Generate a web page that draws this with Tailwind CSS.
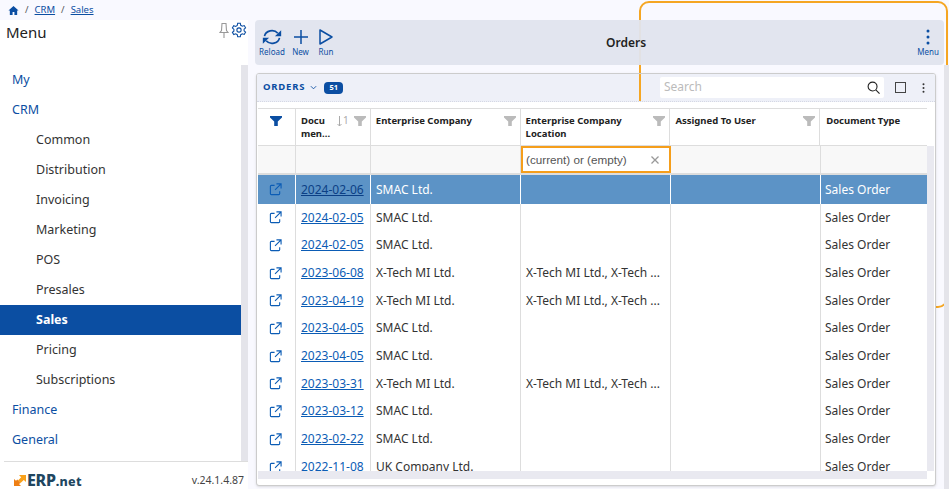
<!DOCTYPE html>
<html lang="en">
  <head>
    <meta charset="UTF-8" />
    <title>Orders</title>
    <script src="https://cdn.jsdelivr.net/npm/@tailwindcss/browser@4"></script>
  </head>
  <body class="bg-[#f9f9ff] text-[#333] font-['Noto_Sans',sans-serif] overflow-hidden">
    <div class="relative w-[949px] h-[489px] overflow-hidden">
      <!-- Orange highlight outline -->
      <div class="absolute left-[639px] top-[1px] w-[309px] h-[307px] border-2 border-[#f5a623] rounded-[10px]"></div>

      <!-- Breadcrumb -->
      <div class="relative h-5 flex items-center pl-[8px] text-[9.500px] text-[#555] gap-[6px]">
        <svg class="w-[11px] h-[11px] text-[#0b4ea2]" viewBox="0 0 24 24" fill="currentColor"><path d="M12 2 1 12h3v10h6v-7h4v7h6V12h3z" /></svg>
        <span>/</span>
        <a class="text-[#0b4ea2] underline">CRM</a>
        <span>/</span>
        <a class="text-[#0b4ea2] underline">Sales</a>
      </div>

      <div class="relative flex h-[469px]">
        <!-- Sidebar -->
        <aside class="w-[248px] bg-white flex flex-col shrink-0">
          <div class="h-[45px] flex justify-between pl-[6px] pr-[1px]">
            <span class="text-[15px] leading-[24px] text-[#222]">Menu</span>
            <div class="flex gap-[1px] pt-[2px]">
              <svg class="w-[12px] h-[17px] text-[#999]" viewBox="0 0 12 17" fill="none" stroke="currentColor" stroke-width="1.100"><path d="M4 1.500h4l.5 7 1.500 2H2l1.500-2zM6 10.500v5.500" /></svg>
              <svg class="w-[16px] h-[16px] text-[#0b4ea2]" viewBox="0 0 24 24" fill="none" stroke="currentColor" stroke-width="1.600"><circle cx="12" cy="12" r="3.200" /><path d="M10 2h4l.6 3 2.400 1.400 2.900-1 2 3.400-2.300 2a7 7 0 0 1 0 2.400l2.300 2-2 3.400-2.900-1-2.400 1.400-.6 3h-4l-.6-3L7 17.800l-2.900 1-2-3.400 2.300-2a7 7 0 0 1 0-2.400l-2.300-2 2-3.400 2.900 1L9.400 5z" /></svg>
            </div>
          </div>
          <div class="flex flex-1 min-h-0">
            <nav id="menu" class="w-[241px] text-[12.500px] text-[#0b4ea2]"></nav>
            <div class="w-[7px] bg-[#e4e4ea]"></div>
          </div>
          <div class="h-[28px] ml-[4px] border-t border-[#ddd] flex items-center justify-between pr-[4px] pt-[10px]">
            <div class="flex items-center pl-[10px] gap-[1px]">
              <svg class="w-[12px] h-[11px]" viewBox="0 0 12 11">
                <path d="M5 0h7v7L9.800 5 6.500 8 4 5.500 7.200 2.300z" fill="#f9a11b" />
                <path d="M0 4l2 1.700L3.300 4.500 6.500 8 5 9l2 2H0z" fill="#ee7f14" />
              </svg>
              <span class="text-[16px] leading-none font-extrabold text-[#20465f] tracking-[-0.3px]">ERP<span class="text-[12.500px] tracking-[0.3px]">.net</span></span>
            </div>
            <span class="text-[10.500px] text-[#444]">v.24.1.4.87</span>
          </div>
        </aside>

        <!-- Main -->
        <main class="relative flex-1 pl-[7px] pr-[5px]">
          <div class="relative h-[45px] bg-[#e0e4ee]/95 rounded-[4px] flex items-center text-[#0b4ea2] text-[8px]">
            <div class="flex items-start gap-[7px] pl-[5px]">
              <button class="flex flex-col items-center w-[24px]">
                <svg class="w-[20px] h-[18px]" viewBox="0 0 24 20" fill="none" stroke="currentColor" stroke-width="2">
                  <path d="M3 9A9 8 0 0 1 19 5.500M21 11A9 8 0 0 1 5 14.500" />
                  <path d="M15.500 9H23V2zM8.500 11H1v7z" fill="currentColor" stroke="none" />
                </svg>
                <span>Reload</span>
              </button>
              <button class="flex flex-col items-center w-[19px]">
                <svg class="w-[18px] h-[18px]" viewBox="0 0 18 18" stroke="currentColor" stroke-width="1.500"><path d="M9 2v14M2 9h14" /></svg>
                <span>New</span>
              </button>
              <button class="flex flex-col items-center w-[16px] ml-[1px]">
                <svg class="w-[16px] h-[18px]" viewBox="0 0 16 18" fill="none" stroke="currentColor" stroke-width="1.500"><path d="M2 2v14l12-7z" stroke-linejoin="round" /></svg>
                <span>Run</span>
              </button>
            </div>
            <h1 class="absolute left-[351px] text-[12px] font-semibold text-[#222]">Orders</h1>
            <button class="absolute right-[5px] flex flex-col items-center">
              <svg class="w-[6px] h-[18px]" viewBox="0 0 6 18" fill="currentColor"><circle cx="3" cy="3" r="1.500" /><circle cx="3" cy="9" r="1.500" /><circle cx="3" cy="15" r="1.500" /></svg>
              <span>Menu</span>
            </button>
          </div>

          <!-- Orders panel -->
          <section class="relative ml-[1px] mt-[8px] w-[680px] h-[413px] bg-white border border-[#ccc] rounded-[3px] shadow-sm flex flex-col overflow-hidden">
            <div class="relative h-[28px] shrink-0 bg-[#eef0f8] border-b border-dotted border-[#d5d8e4] flex items-center pl-[6px] pr-[10px]">
              <span class="absolute left-[382px] top-0 bottom-0 w-[2px] bg-[#f5a623]"></span>
              <span class="text-[9.500px] font-bold tracking-[0.8px] text-[#0b4ea2]">ORDERS</span>
              <svg class="w-[7px] h-[5px] ml-[5px] text-[#0b4ea2]" viewBox="0 0 8 5" fill="none" stroke="currentColor"><path d="m1 1 3 3 3-3" /></svg>
              <span class="ml-[7px] w-[19px] h-[12px] rounded-[4px] bg-[#0b4ea2] text-white text-[7.500px] font-bold flex items-center justify-center">51</span>
              <div class="ml-auto w-[224px] h-[21px] bg-white rounded-[2px] flex items-center justify-between pl-[4px] pr-[4px] text-[12px] text-[#bbb]">
                <span class="pb-[2px]">Search</span>
                <svg class="w-[13px] h-[13px] text-[#222]" viewBox="0 0 14 14" fill="none" stroke="currentColor" stroke-width="1.200"><circle cx="6" cy="6" r="4.800" /><path d="m9.500 9.500 4 4" /></svg>
              </div>
              <div class="ml-[11px] w-[11px] h-[11px] border border-[#444]"></div>
              <svg class="ml-[16px] w-[3px] h-[10px] text-[#333]" viewBox="0 0 3 10" fill="currentColor"><circle cx="1.500" cy="1.200" r="1" /><circle cx="1.500" cy="5" r="1" /><circle cx="1.500" cy="8.800" r="1" /></svg>
            </div>

            <div class="pl-[1px] pt-[6px] flex-1 min-h-0 flex flex-col">
              <div class="flex flex-1 min-h-0">
                <div class="w-[669px] shrink-0 overflow-hidden">
                  <!-- Column headers -->
                  <div id="head" class="h-[38px] flex border-y border-[#ddd] text-[9.500px] font-bold leading-[13px] text-[#222]"></div>
                  <!-- Filter row -->
                  <div class="h-[29px] flex bg-[#f8f8f8] border-b-[2px] border-[#ddd]">
                    <div class="w-[38px] border-r border-[#ddd]"></div>
                    <div class="w-[75px] border-r border-[#ddd]"></div>
                    <div class="w-[150px] border-r border-[#ddd]"></div>
                    <div class="w-[150px] border-2 border-[#f59e1b] bg-white flex items-center justify-between pl-[3px] pr-[10px] font-['Liberation_Sans',sans-serif] text-[11.700px] text-[#555]">
                      <span>(current) or (empty)</span>
                      <svg class="w-[8px] h-[8px] text-[#999]" viewBox="0 0 8 8" stroke="currentColor" stroke-width="1.300"><path d="m.5.500 7 7m0-7-7 7" /></svg>
                    </div>
                    <div class="w-[150px] border-r border-[#ddd]"></div>
                    <div class="flex-1"></div>
                  </div>
                  <!-- Rows -->
                  <div id="rows" class="text-[12px] text-[#333]"></div>
                </div>
                <div class="w-[7px] bg-[#e9e9f0] mt-[38px]"></div>
              </div>
              <div class="h-[8px] shrink-0 flex mb-[6px]">
                <div class="w-[669px] bg-[#e9e9f0]"></div>
              </div>
            </div>
          </section>

          <div class="absolute right-0 top-[45px] bottom-0 w-[5px] bg-[#e4e4ea]"></div>
        </main>
      </div>
    </div>

    <script>
      const menuItems = [
        ["My", false],
        ["CRM", false],
        ["Common", true],
        ["Distribution", true],
        ["Invoicing", true],
        ["Marketing", true],
        ["POS", true],
        ["Presales", true],
        ["Sales", true],
        ["Pricing", true],
        ["Subscriptions", true],
        ["Finance", false],
        ["General", false],
      ];

      document.getElementById("menu").innerHTML = menuItems
        .map(([label, child]) => {
          const active = label === "Sales";
          return `<div class="h-[30px] flex items-center ${child ? "pl-[36px]" : "pl-[12px]"} ${
            active ? "bg-[#0b4ea2] text-white font-bold" : child ? "text-[#333]" : ""
          }">${label}</div>`;
        })
        .join("");

      const funnel = (color) =>
        `<svg class="w-[12px] h-[10px] mt-[2px] ${color}" viewBox="0 0 12 10" fill="currentColor"><path d="M0 0h12v1.500L7.800 5.500V10H4.200V5.500L0 1.500z"/></svg>`;

      const columns = [
        ["Enterprise Company", 150, true],
        ["Enterprise Company<br>Location", 150, true],
        ["Assigned To User", 150, true],
        ["Document Type", 107, false],
      ];

      document.getElementById("head").innerHTML =
        `<div class="w-[38px] border-r border-[#ddd] flex justify-center pt-[5px]">${funnel("text-[#0b4ea2]")}</div>
         <div class="w-[75px] border-r border-[#ddd] flex pl-[5px] pr-[4px] pt-[5px]">
           <span class="w-[34px]">Docu men...</span>
           <span class="ml-auto mr-[5px] flex items-start gap-[1px] text-[#aaa] font-normal text-[10px]">
             <svg class="w-[5px] h-[11px] mt-[2px]" viewBox="0 0 5 11" fill="none" stroke="currentColor"><path d="M2.500 0v10M.5 8l2 2 2-2"/></svg>1
           </span>${funnel("text-[#bbb]")}
         </div>` +
        columns
          .map(
            ([title, width, filter]) =>
              `<div style="width:${width}px" class="${width === 150 ? "border-r border-[#ddd] pl-[5px]" : "pl-[6px]"} flex justify-between pr-[4px] pt-[5px]">
                 <span>${title}</span>${filter ? funnel("text-[#bbb]") : ""}
               </div>`
          )
          .join("");

      const xTech = "X-Tech MI Ltd., X-Tech ...";
      const rows = [
        ["2024-02-06", "SMAC Ltd.", ""],
        ["2024-02-05", "SMAC Ltd.", ""],
        ["2024-02-05", "SMAC Ltd.", ""],
        ["2023-06-08", "X-Tech MI Ltd.", xTech],
        ["2023-04-19", "X-Tech MI Ltd.", xTech],
        ["2023-04-05", "SMAC Ltd.", ""],
        ["2023-04-05", "SMAC Ltd.", ""],
        ["2023-03-31", "X-Tech MI Ltd.", xTech],
        ["2023-03-12", "SMAC Ltd.", ""],
        ["2023-02-22", "SMAC Ltd.", ""],
        ["2022-11-08", "UK Company Ltd.", ""],
      ];

      document.getElementById("rows").innerHTML = rows
        .map(([date, company, location], i) => {
          const selected = i === 0;
          const line = selected ? "border-white" : "border-[#ddd]";
          return `<div class="${selected ? "h-[29px] bg-[#5c93c6] text-white" : "h-[27.700px]"} flex items-center">
            <div class="w-[38px] h-full border-r ${line} flex items-center justify-center pr-[2px]">
              <svg class="w-[13px] h-[13px] text-[#0b5cb5]" viewBox="0 0 14 14" fill="none" stroke="currentColor" stroke-width="1.200"><path d="M6 2.500H2.500a1 1 0 0 0-1 1v8a1 1 0 0 0 1 1h8a1 1 0 0 0 1-1V9M8 1h5v5M13 1 6.500 7.500"/></svg>
            </div>
            <div class="w-[75px] h-full border-r ${line} flex items-center pl-[5px] ${selected ? "" : "pb-[0.5px]"}"><a class="underline ${selected ? "text-[#0b3f85]" : "text-[#0b5cb5]"}">${date}</a></div>
            <div class="w-[150px] h-full border-r ${line} flex items-center pl-[5px] ${selected ? "" : "pb-[0.5px]"}">${company}</div>
            <div class="w-[150px] h-full border-r ${line} flex items-center pl-[5px] ${selected ? "" : "pb-[0.5px]"}">${location}</div>
            <div class="w-[150px] h-full border-r ${line}"></div>
            <div class="flex-1 h-full flex items-center pl-[4px] ${selected ? "" : "pb-[0.5px]"}">Sales Order</div>
          </div>`;
        })
        .join("");
    </script>
  </body>
</html>
